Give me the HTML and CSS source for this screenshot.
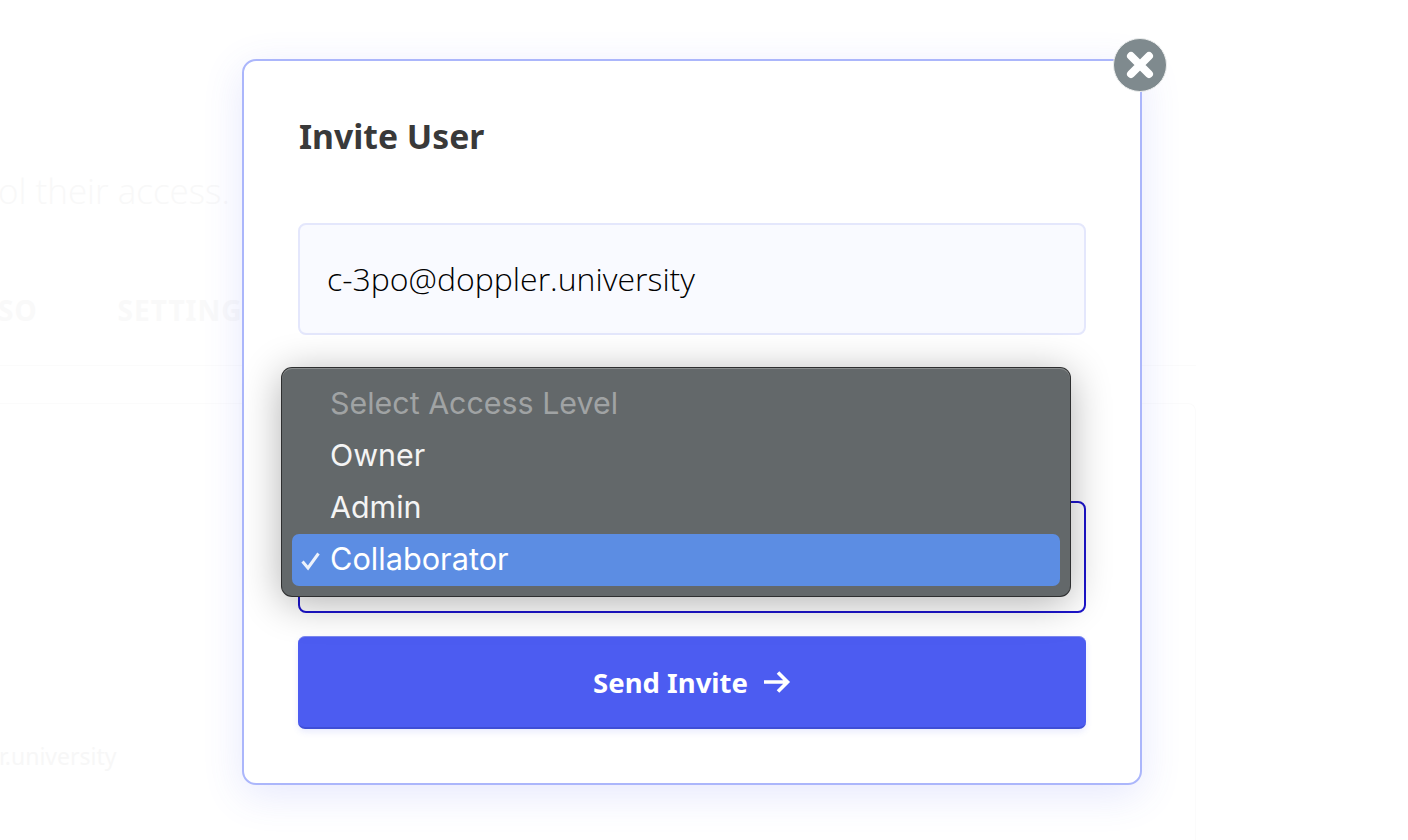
FILE: index.html
```html
<!DOCTYPE html>
<html lang="en">
<head>
<meta charset="utf-8">
<title>Invite User</title>
<link rel="stylesheet" href="styles.css">
</head>
<body>
<main class="page">
  <p class="lead">ol their access.</p>
  <nav class="tabs"><span class="tab-sso">SO</span><span>SETTINGS</span></nav>
  <div class="rule"></div>
  <section class="card"><span class="card-email">r.university</span></section>
</main>
<div class="overlay">
  <div class="modal">
    <h2 class="title">Invite User</h2>
    <div class="field email">c-3po@doppler.university</div>
    <div class="field select"></div>
    <button class="send" type="button">Send Invite
      <svg class="arrow" width="28" height="24" viewBox="0 0 28 24" aria-hidden="true"><path d="M1 12H25M15 2.500 24.500 12 15 21.500" fill="none" stroke="#fff" stroke-width="3.600"/></svg>
    </button>
    <button class="close" type="button" aria-label="Close">
      <svg width="34" height="34" viewBox="0 0 34 34" aria-hidden="true"><path d="M8 8 26 26M26 8 8 26" stroke="#fff" stroke-width="8" stroke-linecap="round"/></svg>
    </button>
    <ul class="menu">
      <li class="option muted">Select Access Level</li>
      <li class="option">Owner</li>
      <li class="option">Admin</li>
      <li class="option active">
        <svg class="check" width="20" height="20" viewBox="0 0 20 20" aria-hidden="true"><path d="M2.500 10.500 8 17 18.500 2.500" fill="none" stroke="#edf2fb" stroke-width="3"/></svg>
        Collaborator
      </li>
    </ul>
  </div>
</div>
</body>
</html>
```
FILE: styles.css
```css
* { box-sizing: border-box; }
html, body { margin: 0; height: 100%; background: #fff; overflow: hidden; }
body { font-family: "Noto Sans", sans-serif; position: relative; }

.page { width: 1196px; height: 840px; display: flex; flex-direction: column; color: #f8f8f8; }
.lead { margin: 170px 0 0 -2px; font-size: 35px; line-height: 42px; font-weight: 300; font-family: "Open Sans", sans-serif; }
.tabs { display: flex; gap: 80px; margin-top: 79px; margin-left: -2px; height: 38px; font-size: 28px; font-weight: 700; line-height: 38px; color: #f9f9f9; letter-spacing: 1px; }
.rule { margin-top: 36px; border-top: 1px solid #fbfbfb; }
.card { flex: 1; margin-top: 37px; border: 1px solid #fbfbfb; border-left: 0; border-bottom: 0; border-top-right-radius: 8px; padding-top: 338px; font-size: 23px; line-height: 28px; }
.card-email { color: #f7f7f7; margin-left: -1px; }

.overlay { position: absolute; inset: 0; }
.modal { position: absolute; left: 242px; top: 59px; width: 900px; height: 726px; padding: 54px 54px; background: #fff; border: 2px solid #abb6fb; border-radius: 14px; box-shadow: 0 10px 40px rgba(76, 92, 240, .14); display: flex; flex-direction: column; }
.title { margin: -2px 0 0 1px; height: 46px; font-size: 33.700px; line-height: 46px; font-weight: 700; color: #393939; }
.field { width: 788px; height: 112px; border-radius: 8px; }
.email { margin-top: 64px; padding: 0 27px; background: #f9faff; border: 2px solid #e4e7fc; font-family: "Open Sans", sans-serif; font-weight: 300; font-size: 32px; line-height: 108px; color: #000; }
.select { margin-top: 166px; border: 2px solid #1c14cc; background: #fff; }
.send { margin-top: 23px; width: 788px; height: 93px; display: flex; align-items: center; justify-content: center; gap: 15px; background: #4c5cf1; border: 0; border-top: 1px solid #7d89ee; border-bottom: 2px solid #3f4ed6; border-radius: 7px; color: #fff; font: 700 27.500px "Noto Sans", sans-serif; box-shadow: 0 3px 6px rgba(76, 92, 240, .12); }

.close { position: absolute; right: -27px; top: -23px; width: 54px; height: 54px; padding: 0; border: 1px solid #eceeee; border-radius: 50%; background: #7f8a8e; display: flex; align-items: center; justify-content: center; }

.menu { position: absolute; left: 38px; top: 307px; width: 788px; height: 228px; margin: 0; padding: 10px; list-style: none; background: #63686a; border-radius: 10px; box-shadow: 0 0 0 1px #2e2f30, inset 0 1px 0 #8a8d8e, 0 6px 40px rgba(0, 0, 0, .32); font-family: Inter, "Liberation Sans", sans-serif; font-size: 30.400px; color: #f4f4f4; }
.option { position: relative; height: 52px; line-height: 50px; padding-left: 38px; }
.muted { color: #a0a3a4; }
.active { background: #5c8de3; border-radius: 7px; color: #fff; font-size: 30.700px; }
.check { position: absolute; left: 8px; top: 17px; }
```
